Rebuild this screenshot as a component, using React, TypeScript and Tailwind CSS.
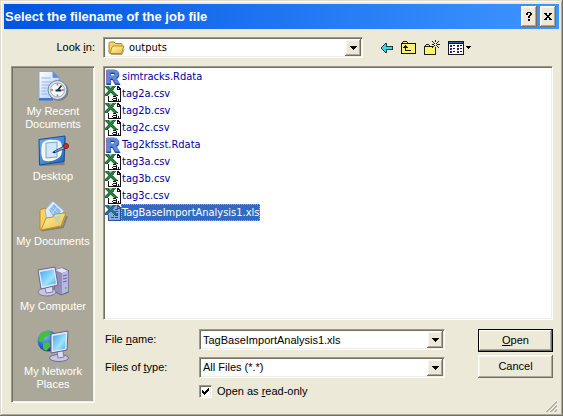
import React, { useState } from "react";

const raised =
  "bg-[#ece9d8] shadow-[inset_-1px_-1px_0_#716f64,inset_1px_1px_0_#ffffff,inset_-2px_-2px_0_#aca899,inset_2px_2px_0_#f6f4ec]";
const sunken =
  "border border-t-[#9d9a8b] border-l-[#9d9a8b] border-r-white border-b-white shadow-[inset_1px_1px_0_#716f64,inset_-1px_-1px_0_#f1efe2]";

type Palette = Record<string, string>;

function Bitmap({ rows, palette }: { rows: string[]; palette: Palette }) {
  return (
    <svg
      width={rows[0].length}
      height={rows.length}
      viewBox={`0 0 ${rows[0].length} ${rows.length}`}
      shapeRendering="crispEdges"
      className="block shrink-0"
      aria-hidden="true"
    >
      {rows.flatMap((row, y) =>
        row.split("").map((c, x) =>
          palette[c] ? <rect key={`${x}-${y}`} x={x} y={y} width="1" height="1" fill={palette[c]} /> : null
        )
      )}
    </svg>
  );
}

const sheetRows = [
  "gGgGsssgGgGWKK..",
  "sGgGgsgGgGWWKKK.",
  ".sGgGgGgGWWWKWKK",
  "..sGgGgGgWWWKKKK",
  "...gGgGgWWWWWWWK",
  "..sGgGgGgWWWWWWK",
  ".sGgGgGgGgWWWWWK",
  "sGgGgWsGgGgWWWWK",
  "GgGgWWWsGgGgWWWK",
  "GGGWWWWWsGGGKWWK",
  "...KWWWWKKKWWWWK",
  "...KWWWWWWWKWWWK",
  "...KWWWWKKKKWWWK",
  "...KWWWKWWWKWKWK",
  "...KWWWWKKKKWKWK",
  "...KKKKKKKKKKKKK",
];
const bookRows = [
  "gGgGsssgGgGbKK..",
  "sGgGgsgGgGbbKKK.",
  ".sGgGgGgGbbbKbKK",
  "..sGgGgGgbbbKKKK",
  "...gGgGgbbKKKbbK",
  "..sGgGgGgbbbbbbK",
  ".sGgGgGgGgKKKbbK",
  "sGgGgbsGgGgbbbbK",
  "GgGgbbbsGgGgKbbK",
  "GGGbbbbbsGGGKbbK",
  "...KbbbbKbKKKbbK",
  "...KbbbbbbbbbbbK",
  "...KbbKKKbKKKbbK",
  "...KbbbbbbbbbbbK",
  "...KbbbbbbbbbbbK",
  "...KKKKKKKKKKKKK",
];

const CsvIcon = () => (
  <Bitmap rows={sheetRows} palette={{ G: "#176b2c", g: "#3f8a4e", s: "#a9b5a6", W: "#ffffff", K: "#111111" }} />
);
const XlsIcon = () => (
  <Bitmap rows={bookRows} palette={{ G: "#1c5f83", g: "#347a98", s: "#8aa9bd", b: "#86abe0", K: "#2a5098" }} />
);

const RIcon = () => (
  <svg width="16" height="22" viewBox="0 0 16 22" className="block shrink-0" aria-hidden="true">
    <text x="1" y="18" fontFamily="Liberation Sans, sans-serif" fontWeight="bold" fontSize="18" fill="#1f3f94" stroke="#1f3f94" strokeWidth="2">
      R
    </text>
    <text x="1" y="17" fontFamily="Liberation Sans, sans-serif" fontWeight="bold" fontSize="18" fill="#5f8bd6" stroke="#5f8bd6">
      R
    </text>
  </svg>
);

const FolderIcon = () => (
  <svg width="17" height="16" viewBox="0 0 17 16" aria-hidden="true">
    <defs>
      <linearGradient id="folder" x1="0" y1="0" x2="1" y2="1">
        <stop offset="0" stopColor="#fff8b0" />
        <stop offset="1" stopColor="#eac042" />
      </linearGradient>
    </defs>
    <path d="M1 12.500V3.500Q1 2 2.500 2H6l1.500 1.500H13q1 0 1 1V6l-3 7H2Z" fill="#f2d565" stroke="#a7842b" />
    <path d="M5 6h11l-2.500 7.500H2L4 7Z" fill="url(#folder)" stroke="#b48d2c" />
    <path d="M3 14.500h11l2-5" fill="none" stroke="#74643a" strokeWidth="1" opacity=".6" />
  </svg>
);

const BackIcon = () => (
  <Bitmap
    rows={["....KK......", "...KCK......", "..KCCK......", ".KCCCKKKKKKK", "KCCCCCCCCCCK", ".KCCCKKKKKKK", "..KCCK......", "...KCK......", "....KK......"].flatMap((row, i) => (i === 4 ? [row, row] : [row])).slice(0, 10)}
    palette={{ K: "#173c47", C: "#35dbe5" }}
  />
);
const UpIcon = () => (
  <Bitmap
    rows={[
      "..KKKK.........",
      ".KYYYYK........",
      "KKKKKKKKKKKKKKK",
      "KYYYYYYYYYYYYYK",
      "KYYYKYYYYYYYYYK",
      "KYYKKKYYYYYYYYK",
      "KYKKKKKYYYYYYYK",
      "KYYYKYYYYYYYYYK",
      "KYYYKYYYYYYYYYK",
      "KYYYKKKKKKYYYYK",
      "KYYYYYYYYYYYYYK",
      "KYYYYYYYYYYYYYK",
      "KKKKKKKKKKKKKKK",
    ]}
    palette={{ K: "#111100", Y: "#fbf36c" }}
  />
);
const NewFolderIcon = () => (
  <Bitmap
    rows={[
      "...........K....",
      "........K..K..K.",
      ".........K...K..",
      "..........K.K...",
      "..KKK...KK...KKK",
      ".KYYYK....K.K...",
      "KKKKKKKKKK...K..",
      "KYYYYYYYK..K..K.",
      "KYYYYYYYYYYK....",
      "KYYYYYYYYYYK....",
      "KYYYYYYYYYYK....",
      "KYYYYYYYYYYK....",
      "KYYYYYYYYYYK....",
      "KYYYYYYYYYYK....",
      "KKKKKKKKKKKK....",
    ]}
    palette={{ K: "#222211", Y: "#fbf36c" }}
  />
);
const ViewsIcon = () => (
  <Bitmap
    rows={[
      "KKKKKKKKKKKKKKKK",
      "KBBBBBBBBBBBBBBK",
      "KKKKKKKKKKKKKKKK",
      "KWWWWWWWWWWWWWWK",
      "KWNNWKKWWNNWKKWK",
      "KWNNWWWWWNNWWWWK",
      "KWWWWWWWWWWWWWWK",
      "KWNNWKKWWNNWKKWK",
      "KWNNWWWWWNNWWWWK",
      "KWWWWWWWWWWWWWWK",
      "KWNNWKKWWNNWKKWK",
      "KWNNWWWWWNNWWWWK",
      "KWWWWWWWWWWWWWWK",
      "KKKKKKKKKKKKKKKK",
    ]}
    palette={{ K: "#16161c", B: "#375f9b", W: "#ffffff", N: "#22227f" }}
  />
);
const DownArrow = () => <Bitmap rows={["KKKKKKK", ".KKKKK.", "..KKK..", "...K..."]} palette={{ K: "#000000" }} />;
const SmallArrow = () => <Bitmap rows={["KKKKK", ".KKK.", "..K.."]} palette={{ K: "#000000" }} />;
const HelpGlyph = () => (
  <Bitmap rows={[".KKKK.", "KK..KK", "KK..KK", "...KK.", "..KK..", "..KK..", "......", "..KK..", "..KK.."]} palette={{ K: "#000000" }} />
);
const CloseGlyph = () => (
  <Bitmap rows={["KKK..KKK", ".KK..KK.", "..KKKK..", "...KK...", "..KKKK..", ".KK..KK.", "KKK..KKK"]} palette={{ K: "#000000" }} />
);

const Big = ({ children }: { children: React.ReactNode }) => (
  <svg width="32" height="32" viewBox="0 0 32 32" className="block" aria-hidden="true">
    {children}
  </svg>
);

const RecentIcon = () => (
  <Big>
    <defs>
      <linearGradient id="page" x1="0" y1="0" x2="1" y2="1">
        <stop offset="0" stopColor="#ffffff" />
        <stop offset="1" stopColor="#a9c8f8" />
      </linearGradient>
    </defs>
    <path d="M2 1.500H16l6 6V30H2Z" fill="url(#page)" stroke="#88a8dc" />
    <path d="M16 1.500v6h6Z" fill="#5b8be0" stroke="#7397d0" />
    <path d="M4.500 8h9M4.500 12h10M4.500 15h8M4.500 18h6M4.500 21h5M4.500 24h6" stroke="#8fb4f2" />
    <path d="M2 28h14v2.500H2Z" fill="#4475d0" />
    <circle cx="21.500" cy="21" r="10" fill="#737a85" />
    <circle cx="20.500" cy="20" r="9.500" fill="#d9e2ea" stroke="#738595" />
    <circle cx="20.500" cy="20" r="7" fill="#f6fcff" stroke="#9ab1c3" />
    <path d="M20.500 13.500v2M20.500 24.500v2M14 20h2M25 20h2" stroke="#d75c42" strokeWidth="1.500" />
    <path d="M24.500 15.500 20.500 20.500M18.500 20.500h6" stroke="#18314a" strokeWidth="1.800" />
  </Big>
);
const DesktopIcon = () => (
  <Big>
    <defs>
      <linearGradient id="desk" x1="0" y1="0" x2="1" y2="1">
        <stop offset="0" stopColor="#6eb5ff" />
        <stop offset="1" stopColor="#1763c6" />
      </linearGradient>
    </defs>
    <path d="M4 4 29 2.500 27.500 30 3.500 31Z" fill="#60666a" opacity=".6" />
    <path d="M2 4.500 28 1 27 26.500 2.500 30Z" fill="url(#desk)" stroke="#174a9e" />
    <path d="M5 9Q8 4 17 5q8-1 8 7 1 9-5 12-8 4-14 1-3-7-1-16Z" fill="#fff7d8" />
    <path d="m9 8 11-1v15L9 23Z" fill="#cfe8fd" stroke="#6fa6dc" />
    <path d="m16 17 11-6 2 2-12 5Z" fill="#7cb3df" stroke="#275587" />
    <path d="m15 18 3-2v2Z" fill="#102747" />
    <circle cx="29" cy="11" r="2.500" fill="#bf3427" stroke="#7c2018" />
  </Big>
);
const DocumentsIcon = () => (
  <Big>
    <defs>
      <linearGradient id="docs" x1="0" y1="0" x2="1" y2="1">
        <stop offset="0" stopColor="#fff5a4" />
        <stop offset="1" stopColor="#eabb43" />
      </linearGradient>
    </defs>
    <path d="M5 30.500 26 27l4-11" fill="none" stroke="#6d664f" strokeWidth="2" opacity=".6" />
    <path d="M3 10 8 8l3 3 13 1v14L3 30Z" fill="#f5d367" stroke="#b38b2f" />
    <path d="M8 10 16 1l11 10-8 14-9-4Z" fill="#d9edff" stroke="#86b6e7" />
    <path d="m12 10 5-6 7 7-6 9Z" fill="#8bbcf0" />
    <path d="m13 9 7 8M15 7l7 7M20 7l-7 9" stroke="#b6d9ff" />
    <path d="M9 18 16 17l2-3 11-1-5 13-20 4Z" fill="url(#docs)" stroke="#b99031" />
    <path d="m16 17 5 6 3-8Z" fill="#a8cfd9" opacity=".7" />
  </Big>
);
const ComputerIcon = () => (
  <Big>
    <defs>
      <linearGradient id="screen" x1="0" y1="0" x2="1" y2="1">
        <stop offset="0" stopColor="#43a5f7" />
        <stop offset=".6" stopColor="#9ce4ff" />
        <stop offset="1" stopColor="#42a8ee" />
      </linearGradient>
    </defs>
    <path d="m18 5 8-2 6 3v21l-8 3-7-4Z" fill="#8f8fb8" stroke="#66658c" />
    <path d="m18 5 7-2 6 3-6 2Z" fill="#e5e3fa" />
    <path d="m25 8 6-2v20l-6 3Z" fill="#b9b8dc" />
    <path d="m26 11 4-1M26 14l4-1M26 17l4-1" stroke="#6767a0" />
    <path d="M28 23h2" stroke="#4ad34c" strokeWidth="2" />
    <ellipse cx="10" cy="27" rx="9" ry="4" fill="#c8c6e3" stroke="#7775a0" />
    <path d="m8 21 7-1 1 7-7 1Z" fill="#dddcef" stroke="#8583ab" />
    <path d="M1 5 18 2l3 18-17 4Z" fill="#e5e5f5" stroke="#696994" />
    <path d="M3 7 16.500 4.500 19 18.500 5.500 21.500Z" fill="url(#screen)" />
  </Big>
);
const NetworkIcon = () => (
  <Big>
    <defs>
      <radialGradient id="globe" cx=".35" cy=".25" r=".8">
        <stop offset="0" stopColor="#77c7ff" />
        <stop offset=".6" stopColor="#246bd0" />
        <stop offset="1" stopColor="#143b83" />
      </radialGradient>
    </defs>
    <circle cx="11" cy="11" r="10.500" fill="url(#globe)" />
    <path d="M3 4 8 1l6 1-3 4-4 2-1 4-5-1ZM6 13l6-1 2 4-5 5-3-2ZM14 5l4-2 3 5-6 2Z" fill="#4abc3e" />
    <ellipse cx="22" cy="28" rx="9.500" ry="3.500" fill="#c9c8e3" stroke="#6c6b94" />
    <path d="m20 20 6 1 1 6-6 1Z" fill="#ddddf0" stroke="#7e7eaa" />
    <path d="m14 4 17-3-1 19-16 3Z" fill="#e6e6f5" stroke="#626290" />
    <path d="m16 6 13-2.500-1 15L16 21Z" fill="url(#screen)" />
  </Big>
);

const places = [
  { label: ["My Recent", "Documents"], Icon: RecentIcon },
  { label: ["Desktop"], Icon: DesktopIcon },
  { label: ["My Documents"], Icon: DocumentsIcon },
  { label: ["My Computer"], Icon: ComputerIcon },
  { label: ["My Network", "Places"], Icon: NetworkIcon },
];

const files = [
  { name: "simtracks.Rdata", Icon: RIcon },
  { name: "tag2a.csv", Icon: CsvIcon },
  { name: "tag2b.csv", Icon: CsvIcon },
  { name: "tag2c.csv", Icon: CsvIcon },
  { name: "Tag2kfsst.Rdata", Icon: RIcon },
  { name: "tag3a.csv", Icon: CsvIcon },
  { name: "tag3b.csv", Icon: CsvIcon },
  { name: "tag3c.csv", Icon: CsvIcon },
  { name: "TagBaseImportAnalysis1.xls", Icon: XlsIcon },
];

const arrowBox = `absolute top-[2px] right-[2px] bottom-[2px] flex w-4 items-center justify-center ${raised}`;

export default function App() {
  const [fileName, setFileName] = useState("TagBaseImportAnalysis1.xls");
  const [readOnly, setReadOnly] = useState(true);

  return (
    <main className="bg-[#ece9d8] p-1 font-['Liberation_Sans',Arial,sans-serif] text-[11px] leading-[13px] text-black shadow-[inset_-1px_-1px_0_#716f64,inset_1px_1px_0_#dedbcb,inset_-2px_-2px_0_#aca899,inset_2px_2px_0_#ffffff]">
      <header className="flex h-[25px] items-center gap-[3px] bg-linear-to-r from-[#0054e3] to-[#3d95ff] pr-[3px] pl-px">
        <h1 className="flex-1 text-[13px] leading-4 font-bold whitespace-nowrap text-white">Select the filename of the job file</h1>
        <button type="button" aria-label="Help" className={`flex h-[21px] w-4 items-center justify-center ${raised}`}>
          <HelpGlyph />
        </button>
        <button type="button" aria-label="Close" className={`flex h-[21px] w-4 items-center justify-center ${raised}`}>
          <CloseGlyph />
        </button>
      </header>

      <div className="relative pt-2 pr-1.5 pb-[9px] pl-[7px]">
        <div className="flex h-[21px] items-center">
          <label htmlFor="look-in" className="w-[84px] text-right">
            Look <u>i</u>n:
          </label>
          <div className="relative ml-2 h-[21px] flex-1">
            <select id="look-in" className={`h-full w-full appearance-none bg-white pr-5 pl-[25px] font-['DejaVu_Sans_Condensed','DejaVu_Sans',sans-serif] ${sunken}`}>
              <option>outputs</option>
            </select>
            <span className="pointer-events-none absolute top-[3px] left-[5px]">
              <FolderIcon />
            </span>
            <span className={`pointer-events-none ${arrowBox}`}>
              <DownArrow />
            </span>
          </div>
          <div className="flex w-[190px] items-center gap-2 pl-[18px]">
            <button type="button" aria-label="Back"><BackIcon /></button>
            <button type="button" aria-label="Up one level"><UpIcon /></button>
            <button type="button" aria-label="New folder"><NewFolderIcon /></button>
            <button type="button" aria-label="Views" className="flex items-center gap-0.5">
              <ViewsIcon />
              <SmallArrow />
            </button>
          </div>
        </div>

        <div className="mt-2 flex gap-2">
          <nav aria-label="Places" className={`w-[84px] shrink-0 bg-[#aca899] pt-[3px] pb-[7px] ${sunken}`}>
            {places.map(({ label, Icon }) => (
              <button type="button" key={label[0]} className="flex h-[65px] w-full flex-col items-center text-white">
                <Icon />
                <span className="mt-[3px]">
                  {label.map((line) => (
                    <span key={line} className="block whitespace-nowrap">{line}</span>
                  ))}
                </span>
              </button>
            ))}
          </nav>

          <div className="min-w-0 flex-1">
            <ul className={`h-[254px] bg-white pt-px pl-px font-['DejaVu_Sans_Condensed','DejaVu_Sans',sans-serif] text-[#0000a0] ${sunken}`}>
              {files.map(({ name, Icon }) => (
                <li key={name} className="flex h-[17px] items-center">
                  <Icon />
                  {name === fileName ? (
                    <span className="flex h-[17px] items-center bg-[#316ac5] px-px text-white outline-1 -outline-offset-1 outline-dotted outline-[#d8a35a]">{name}</span>
                  ) : (
                    <span className="px-px">{name}</span>
                  )}
                </li>
              ))}
            </ul>

            <form className="mt-[9px] flex" onSubmit={(e) => e.preventDefault()}>
              <div className="grid flex-1 grid-cols-[94px_1fr] items-center gap-y-[7px] pl-0.5">
                <label htmlFor="file-name">
                  File <u>n</u>ame:
                </label>
                <div className="relative h-[21px]">
                  <input
                    id="file-name"
                    value={fileName}
                    onChange={(e) => setFileName(e.target.value)}
                    className={`block h-full w-full bg-white pr-5 pl-[3px] outline-none ${sunken}`}
                  />
                  <button type="button" aria-label="Show file names" className={arrowBox}>
                    <DownArrow />
                  </button>
                </div>
                <label htmlFor="file-type">
                  Files of <u>t</u>ype:
                </label>
                <div className="relative h-[21px]">
                  <select id="file-type" className={`block h-full w-full appearance-none bg-white pr-5 pl-[3px] ${sunken}`}>
                    <option>All Files (*.*)</option>
                  </select>
                  <span className={`pointer-events-none ${arrowBox}`}>
                    <DownArrow />
                  </span>
                </div>
                <label className="col-start-2 flex items-center gap-[5px]">
                  <span className="relative block size-[13px]">
                    <input
                      type="checkbox"
                      checked={readOnly}
                      onChange={(e) => setReadOnly(e.target.checked)}
                      className={`block size-[13px] appearance-none bg-white ${sunken}`}
                    />
                    {readOnly && (
                      <span className="pointer-events-none absolute top-[3px] left-[3px]">
                        <Bitmap rows={["......K", ".....KK", "K...KKK", "KK.KKK.", "KKKKK..", ".KKK...", "..K...."]} palette={{ K: "#000000" }} />
                      </span>
                    )}
                  </span>
                  <span>
                    Open as <u>r</u>ead-only
                  </span>
                </label>
              </div>
              <div className="ml-[33px] flex w-[75px] flex-col gap-[3px]">
                <button type="submit" className="h-[23px] border border-black bg-[#ece9d8] shadow-[inset_-1px_-1px_0_#716f64,inset_1px_1px_0_#ffffff,inset_-2px_-2px_0_#aca899]">
                  <u>O</u>pen
                </button>
                <button type="button" className={`h-[23px] ${raised}`}>Cancel</button>
              </div>
            </form>
          </div>
        </div>

        <svg width="12" height="12" viewBox="0 0 12 12" className="absolute right-0.5 bottom-0" aria-hidden="true">
          <path d="M0 12 12 0M4 12l8-8M8 12l4-4" stroke="#ffffff" />
          <path d="M1.500 12 12 1.500M5.500 12 12 5.500M9.500 12 12 9.500" stroke="#aca899" strokeWidth="1.500" />
        </svg>
      </div>
    </main>
  );
}
